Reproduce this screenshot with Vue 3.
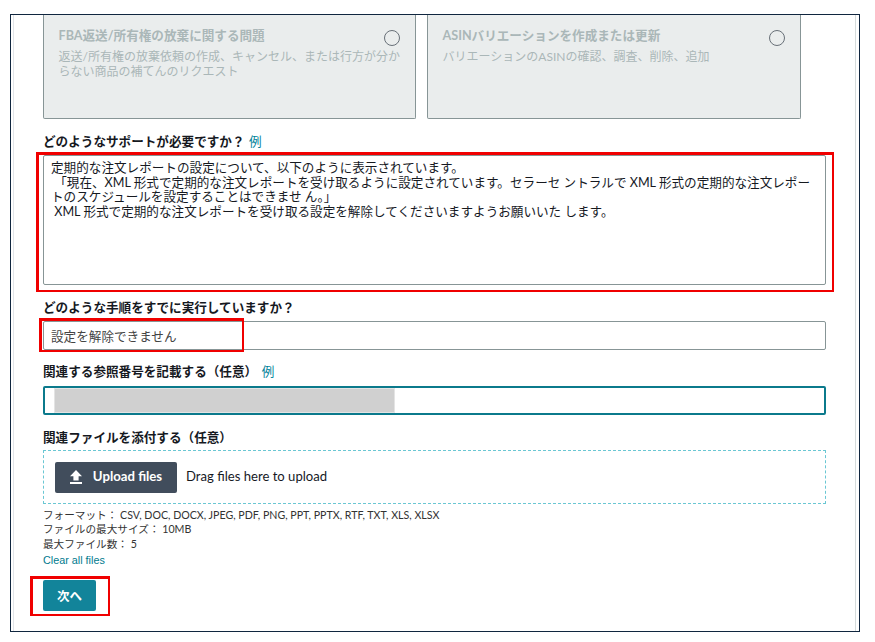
<script setup>
const formats = 'CSV, DOC, DOCX, JPEG, PDF, PNG, PPT, PPTX, RTF, TXT, XLS, XLSX'
const cards = [
  { title: 'FBA返送/所有権の放棄に関する問題', body: '返送/所有権の放棄依頼の作成、キャンセル、または行方が分からない商品の補てんのリクエスト' },
  { title: 'ASINバリエーションを作成または更新', body: 'バリエーションのASINの確認、調査、削除、追加' }
]
</script>

<template>
  <div class="frame">
    <div class="inner">
      <div class="cards">
        <div v-for="c in cards" :key="c.title" class="card">
          <div class="card-head">
            <div class="card-title">{{ c.title }}</div>
            <span class="radio"></span>
          </div>
          <div class="card-body">{{ c.body }}</div>
        </div>
      </div>

      <div class="label first">どのようなサポートが必要ですか？ <a class="link">例</a></div>
      <div class="mark-wrap">
        <div class="textarea">定期的な注文レポートの設定について、以下のように表示されています。<br>&nbsp;「現在、XML 形式で定期的な注文レポートを受け取るように設定されています。セラーセ ントラルで XML 形式の定期的な注文レポー<br>トのスケジュールを設定することはできませ ん。」<br>&nbsp;XML 形式で定期的な注文レポートを受け取る設定を解除してくださいますようお願いいた します。</div>
        <span class="mark mark-area"></span>
      </div>

      <div class="label second">どのような手順をすでに実行していますか？</div>
      <div class="mark-wrap">
        <div class="input">設定を解除できません</div>
        <span class="mark mark-input"></span>
      </div>

      <div class="label third">関連する参照番号を記載する（任意） <a class="link">例</a></div>
      <div class="input focus">
        <span class="redact"></span>
      </div>

      <div class="label fourth">関連ファイルを添付する（任意）</div>
      <div class="drop">
        <button class="upload" type="button">
          <svg class="up-icon" width="12" height="14" viewBox="0 0 12 14">
            <path d="M6 0 L12 6.2 H8.6 V10.6 H3.4 V6.2 H0 Z" fill="#fff" />
            <rect x="0" y="12" width="12" height="2" fill="#fff" />
          </svg>
          <span class="upload-text">Upload files</span>
        </button>
        <span class="drag">Drag files here to upload</span>
      </div>

      <div class="meta">
        <div>フォーマット： {{ formats }}</div>
        <div>ファイルの最大サイズ： 10MB</div>
        <div>最大ファイル数： 5</div>
        <a class="clear">Clear all files</a>
      </div>

      <div class="mark-wrap next-wrap">
        <button class="next" type="button">次へ</button>
        <span class="mark mark-next"></span>
      </div>
    </div>
  </div>
</template>

<style>
body { background: #fff; }
</style>

<style scoped>
.frame {
  box-sizing: border-box;
  width: 850px;
  height: 618px;
  margin: 14px 0 0 10px;
  border: 1px solid #10263f;
  overflow: hidden;
  font-family: Lato, "Noto Sans CJK JP", sans-serif;
  color: #16191f;
}
.inner {
  box-sizing: border-box;
  height: 100%;
  margin: 0 3px 0 2px;
  padding: 0 29px 0 29px;
  border-left: 1px solid #e1e4e8;
  border-right: 1px solid #d5dbdb;
}
.cards {
  display: grid;
  grid-template-columns: 373px 374px;
  gap: 11px;
}
.card {
  box-sizing: border-box;
  height: 104px;
  padding: 13px 15px 0 14.5px;
  background: #eaeded;
  border: 1px solid #879596;
  border-top: 0;
  border-radius: 0 0 2px 2px;
}
.card-head {
  display: flex;
  justify-content: space-between;
}
.card-title {
  font-size: 12.6px;
  line-height: 16px;
  font-weight: 700;
  color: #aab7b8;
}
.card-body {
  margin-top: 3px;
  margin-right: -2px;
  font-size: 12px;
  line-height: 15px;
  color: #aab7b8;
}
.radio {
  box-sizing: border-box;
  flex: none;
  width: 16px;
  height: 16px;
  margin-top: 2px;
  border: 1.5px solid #687078;
  border-radius: 50%;
}
.label {
  font-size: 12.6px;
  line-height: 16px;
  font-weight: 700;
}
.label.first { margin-top: 15px; margin-bottom: 5px; }
.label.second { margin-top: 15px; margin-bottom: 5px; }
.label.third { margin-top: 14px; margin-bottom: 6px; }
.label.fourth { margin-top: 15px; margin-bottom: 4px; }
.link {
  font-weight: 400;
  color: #00829a;
  margin-left: 1.5px;
}
.mark-wrap { position: relative; }
.textarea {
  box-sizing: border-box;
  height: 130px;
  padding: 5px 7px;
  font-size: 12.6px;
  line-height: 14.5px;
  background: #fff;
  border: 1px solid #879596;
  border-radius: 2px;
  white-space: nowrap;
}
.input {
  box-sizing: border-box;
  height: 29px;
  padding: 0 7px;
  display: flex;
  align-items: center;
  font-size: 12.6px;
  color: #444;
  background: #fff;
  border: 1px solid #879596;
  border-radius: 2px;
}
.input.focus {
  padding: 0 0 0 9px;
  border: 2px solid #0b7a8c;
}
.redact {
  width: 341px;
  height: 25px;
  background: #d0d0d0;
  border: 1px solid #e4e4e4;
  box-sizing: border-box;
}
.mark {
  position: absolute;
  box-sizing: border-box;
  border: solid #f00000;
  border-width: 3px 2px 2px 3px;
  pointer-events: none;
}
.mark-area { left: -7px; top: -3px; width: 798px; height: 140px; }
.mark-input { left: -4px; top: -3px; width: 205px; height: 34px; }
.mark-next { left: -13px; top: -4px; width: 80px; height: 40px; }
.drop {
  box-sizing: border-box;
  height: 54px;
  display: flex;
  align-items: center;
  gap: 9px;
  padding-left: 11px;
  border: 1px dashed #6ac7d3;
}
.upload {
  box-sizing: border-box;
  width: 122px;
  height: 31px;
  display: flex;
  align-items: center;
  justify-content: center;
  gap: 11px;
  padding: 0;
  border: 0;
  border-radius: 2px;
  background: #414d5c;
  color: #fff;
  font: 700 13.2px Lato, "Noto Sans CJK JP", sans-serif;
}
.upload-text { padding-bottom: 2px; }
.up-icon { flex: none; }
.drag { font-size: 13.1px; color: #16191f; padding-bottom: 2px; }
.meta {
  margin-top: 4px;
  font-size: 10.63px;
  line-height: 14.4px;
  color: #333;
}
.clear {
  display: block;
  margin-top: 2px;
  font-size: 10.8px;
  color: #007a8e;
  font-family: "Liberation Sans", sans-serif;
}
.next-wrap { width: 53px; margin-top: 12px; }
.next {
  box-sizing: border-box;
  display: block;
  width: 53px;
  height: 31px;
  padding: 0;
  border: 0;
  border-radius: 2px;
  background: #12849a;
  color: #fff;
  font: 700 12.5px Lato, "Noto Sans CJK JP", sans-serif;
}
</style>
